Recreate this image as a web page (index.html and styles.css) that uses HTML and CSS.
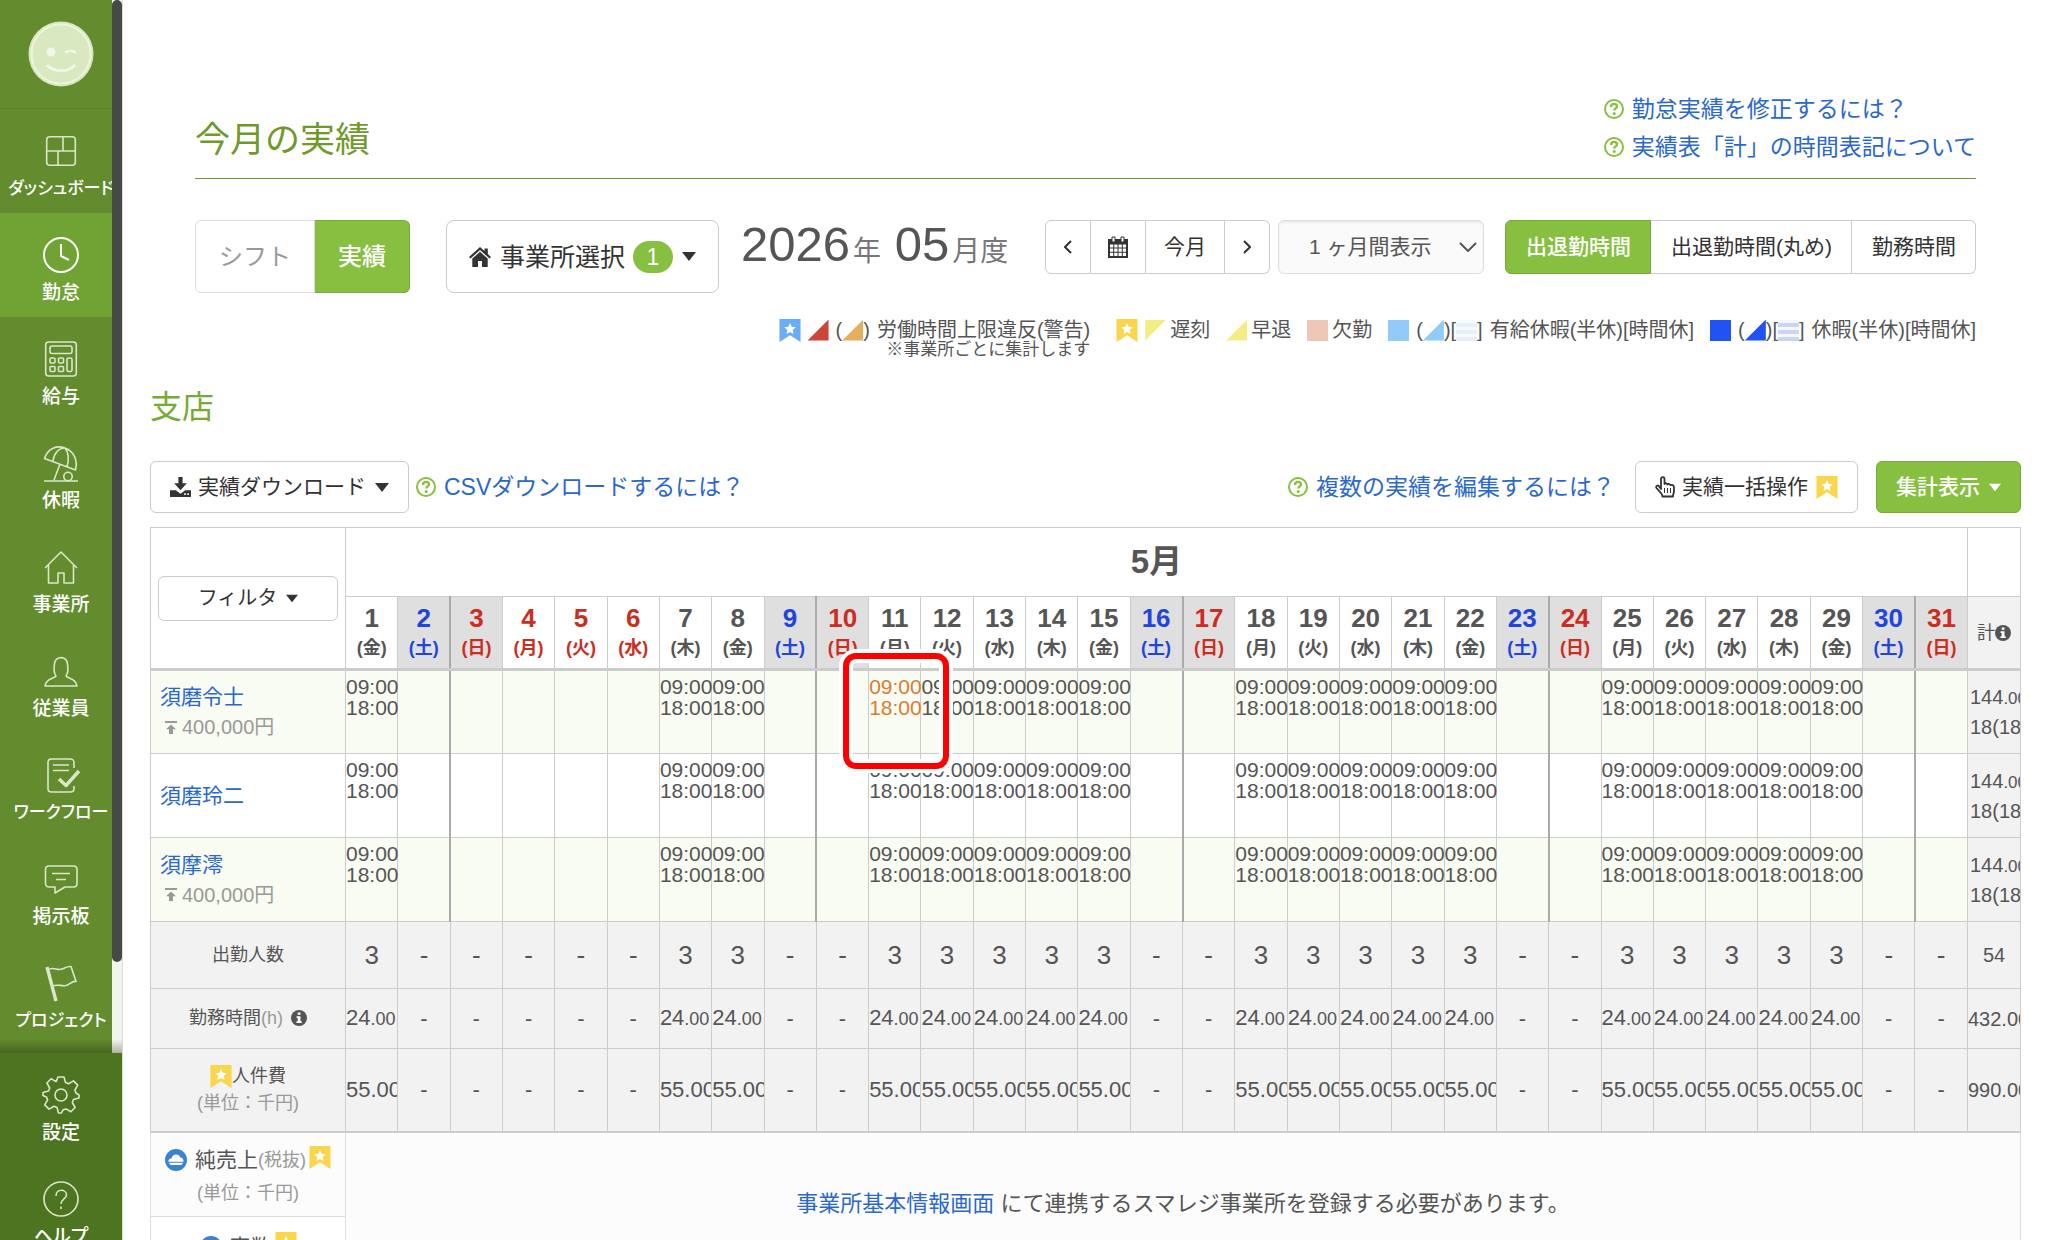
FILE: index.html
```html
<!DOCTYPE html>
<html lang="ja">
<head>
<meta charset="utf-8">
<title>今月の実績</title>
<link rel="stylesheet" href="styles.css">
</head>
<body>
<svg class="sprite" aria-hidden="true">
  <symbol id="help" viewBox="0 0 20 20"><circle cx="10" cy="10" r="9" fill="none" stroke="currentColor" stroke-width="2"/><path d="M7 8c0-4 6-4 6-.6 0 2-2.800 2-2.800 4.200" fill="none" stroke="currentColor" stroke-width="2.400"/><circle cx="10.200" cy="14.600" r="1.500" fill="currentColor"/></symbol>
  <symbol id="info" viewBox="0 0 16 16"><circle cx="8" cy="8" r="8" fill="currentColor"/><path d="M6.700 2.500h2.800v2.300H6.700zM5.600 6.200h3.900v5h1.200v1.900H5.500v-1.900h1.200V8H5.600z" fill="#fff"/></symbol>
  <symbol id="mark" viewBox="0 0 22 24"><path d="M0 0h22v24l-11-7-11 7z" fill="currentColor"/><path d="M11 4.300l1.800 3.900 4.200.4-3.200 2.900.9 4.200-3.700-2.200-3.700 2.200.9-4.200L5 8.600l4.200-.4z" fill="#fff"/></symbol>
  <symbol id="caret" viewBox="0 0 14 9"><path d="M0 0h14L7 9z" fill="currentColor"/></symbol>
  <symbol id="cloud" viewBox="0 0 22 22"><circle cx="11" cy="11" r="11" fill="#3b82cf"/><path d="M3.500 12.800c-.3-2.300 1-3.600 3-3.400C7.200 6.800 8.800 5.400 11 5.400c2.200 0 3.700 1.200 4.200 3.200 2.200.1 3.500 1.700 3.300 4.200z" fill="#fff"/><path d="M4 13.800h14c-.6 1.600-1.500 2.300-3 2.300H7c-1.500 0-2.500-.7-3-2.300z" fill="#fff"/></symbol>
  <symbol id="cap" viewBox="0 0 12 13"><path d="M0 0h12v2H0zM6 3.500l5 4.800H8V13H4V8.300H1z" fill="currentColor"/></symbol>
</svg>
<div class="app">
  <nav class="side" aria-label="メインメニュー">
    <div class="side-list">
      <a class="logo" href="#" aria-label="ホーム">
        <svg width="66" height="66" viewBox="0 0 66 66"><circle cx="33" cy="33" r="32.500" fill="#dae8bf"/><circle cx="33" cy="33" r="29.500" fill="none" stroke="#edf3e2" stroke-width="2"/><circle cx="23" cy="31" r="4.500" fill="#f2f6ec"/><path d="M37.500 32c2-3 8-3 10 0M19 44c7 7.500 21 7.500 28 0" fill="none" stroke="#f2f6ec" stroke-width="2.600"/></svg>
      </a>
      <a class="item long" href="#"><svg viewBox="0 0 40 40"><rect x="5.700" y="5.700" width="28.600" height="28.600" rx="3"/><path d="M6 20h28M22 6v14M17 20v14"/></svg><span>ダッシュボード</span></a>
      <a class="item active" href="#"><svg viewBox="0 0 40 40"><circle cx="20" cy="20" r="17"/><path d="M20 9v12l8 4"/></svg><span>勤怠</span></a>
      <a class="item" href="#"><svg viewBox="0 0 40 40"><rect x="4.700" y="3" width="30.600" height="34" rx="3"/><rect x="9" y="7" width="22" height="7.500" rx="2"/><rect x="9" y="19" width="5" height="5" rx="1"/><rect x="17.500" y="19" width="5" height="5" rx="1"/><rect x="9" y="27.500" width="5" height="5" rx="1"/><rect x="17.500" y="27.500" width="5" height="5" rx="1"/><rect x="26" y="19" width="5" height="13.500" rx="1.500"/></svg><span>給与</span></a>
      <a class="item" href="#"><svg viewBox="0 0 40 40"><path d="M3.500 15.500C7 5 16 2 24 5c9 3.500 13 12 10.500 22zM12 18c1-8 6-13 12-13 4 5 4 12 2 19M19 21l-6 16M3 38h34"/><circle cx="27" cy="33.500" r="4.200"/></svg><span>休暇</span></a>
      <a class="item" href="#"><svg viewBox="0 0 40 40"><path d="M4 21L20 5l16 16M7.500 18v18H17V26h6v10h9.500V18"/></svg><span>事業所</span></a>
      <a class="item" href="#"><svg viewBox="0 0 40 40"><path d="M15 25c-3-4-2-8-1.500-12C14 4.500 26 4.500 26.500 13c.5 4 1.500 8-1.500 12 2 3 10 2 11 10H4c1-8 9-7 11-10z"/></svg><span>従業員</span></a>
      <a class="item long" href="#"><svg viewBox="0 0 40 40"><path d="M33 13V7.500c0-2-1.500-3.500-3.500-3.500h-19C8.500 4 7 5.500 7 7.500v26C7 35.500 8.500 37 10.500 37h19c2 0 3.500-1.500 3.500-3.500V31M12 10h16M12 15.500h16"/><path class="thick" d="M18 24l7 6.500L38 16"/></svg><span>ワークフロー</span></a>
      <a class="item" href="#"><svg viewBox="0 0 40 40"><path d="M8 7h24.500c2 0 3.500 1.500 3.500 3.500v14c0 2-1.500 3.500-3.500 3.500H24l-10 6v-6H8c-2 0-3.500-1.500-3.500-3.500v-14C4.500 8.500 6 7 8 7zM11 14.500h18M15 20.500h10"/></svg><span>掲示板</span></a>
      <a class="item long" href="#"><svg viewBox="0 0 40 40"><path class="thick" d="M6 4l9 34"/><path d="M7 7c5-4 9 1 14-1 3-1 5-3 9-2.500l5 15c-4-1-6 3-10 4-5 1-9-2-14 1"/></svg><span>プロジェクト</span></a>
      <div class="track"><div class="thumb"></div></div>
    </div>
    <div class="side-foot">
      <a class="item" href="#"><svg viewBox="0 0 40 40"><path d="M17 2h6l1.500 5.500 3 1.200 5-2.800 4.200 4.200-2.800 5 1.200 3L38 20v3l-5.500 1.500-1.200 3 2.800 5-4.200 4.200-5-2.800-3 1.200L20.500 38h-3L16 32.500l-3-1.200-5 2.800-4.200-4.200 2.800-5-1.200-3L2 20.500v-3L7.500 16l1.200-3-2.800-5 4.200-4.200 5 2.800z"/><circle cx="20" cy="20" r="6"/></svg><span>設定</span></a>
      <a class="item" href="#"><svg viewBox="0 0 40 40"><circle cx="20" cy="20" r="17"/><path d="M15 17c0-8 10.500-7 10.500-1 0 4-5.500 4-5.500 9M20 27.500v2.500"/></svg><span>ヘルプ</span></a>
    </div>
  </nav>

  <main class="main">
    <header class="page-head">
      <h1>今月の実績</h1>
      <div class="head-links">
        <a class="help-link" href="#"><svg><use href="#help"/></svg>勤怠実績を修正するには？</a>
        <a class="help-link" href="#"><svg><use href="#help"/></svg>実績表「計」の時間表記について</a>
      </div>
    </header>

    <div class="toolbar">
      <div class="group big">
        <button class="seg shift">シフト</button><button class="seg on">実績</button>
      </div>
      <button class="btn office"><svg class="home" viewBox="0 0 22 20"><path d="M11 0l4.500 4V1.500h3.300V7L22 10l-1.500 1.600L11 3 1.500 11.600 0 10zM3.300 11.500L11 4.800l7.700 6.700V20H13v-6H9v6H3.300z" fill="currentColor"/></svg>事業所選択<span class="badge">1</span><svg class="caret"><use href="#caret"/></svg></button>
      <h2 class="period">2026<small>年</small> 05<small>月度</small></h2>
      <div class="tools">
        <div class="group nav">
          <button class="seg" aria-label="前月"><svg width="8" height="14" viewBox="0 0 8 14"><path d="M7 1L1 7l6 6" fill="none" stroke="currentColor" stroke-width="2"/></svg></button><button class="seg cal" aria-label="カレンダー"><svg width="22" height="22" viewBox="0 0 22 22"><path d="M1 3h20v19H1z" fill="currentColor"/><path d="M3 8.500h3.200v3H3zm4.200 0h3.300v3H7.200zm4.300 0h3.300v3h-3.300zm4.300 0H19v3h-3.200zM3 12.500h3.200v3.300H3zm4.200 0h3.300v3.300H7.200zm4.300 0h3.300v3.300h-3.300zm4.300 0H19v3.300h-3.200zM3 16.800h3.200V20H3zm4.200 0h3.300V20H7.200zm4.300 0h3.300V20h-3.300zm4.300 0H19V20h-3.200z" fill="#fff"/><path d="M5 1h3v5H5zM14 1h3v5h-3z" fill="#fff" stroke="currentColor"/></svg></button><button class="seg now">今月</button><button class="seg" aria-label="翌月"><svg width="8" height="14" viewBox="0 0 8 14"><path d="M1 1l6 6-6 6" fill="none" stroke="currentColor" stroke-width="2"/></svg></button>
        </div>
        <div class="select-box">
          <select aria-label="表示期間"><option>1 ヶ月間表示</option></select>
          <svg viewBox="0 0 18 10"><path d="M1 1l8 8 8-8" fill="none" stroke="currentColor" stroke-width="2"/></svg>
        </div>
        <div class="group modes">
          <button class="seg on">出退勤時間</button><button class="seg">出退勤時間(丸め)</button><button class="seg">勤務時間</button>
        </div>
      </div>
    </div>

    <div class="legend">
      <div class="legend-first">
        <span class="key"><svg class="mark blue"><use href="#mark"/></svg><i class="sw tri red"></i><span class="paren">(<i class="sw tri orange"></i>)</span>労働時間上限違反(警告)</span>
        <small>※事業所ごとに集計します</small>
      </div>
      <span class="key tight"><svg class="mark"><use href="#mark"/></svg><i class="sw tri-top"></i>遅刻</span>
      <span class="key tight"><i class="sw tri yellow"></i>早退</span>
      <span class="key tight"><i class="sw absent"></i>欠勤</span>
      <span class="key"><i class="sw paid"></i><span class="paren">(<i class="sw tri paid-half"></i>)[<i class="sw stripe-paid"></i>]</span>有給休暇(半休)[時間休]</span>
      <span class="key"><i class="sw leave"></i><span class="paren">(<i class="sw tri leave-half"></i>)[<i class="sw stripe-leave"></i>]</span>休暇(半休)[時間休]</span>
    </div>

    <h2 class="branch">支店</h2>

    <div class="actions">
      <button class="btn"><svg class="ic" viewBox="0 0 20 19"><path d="M8 0h4v6h4l-6 6.500L4 6h4zM0 12.500h5.500L10 16l4.500-3.500H20V19H0z" fill="currentColor"/><path d="M13.500 15.500h1.600v1.600h-1.600zM16.500 15.500H18v1.600h-1.500z" fill="#fff"/></svg>実績ダウンロード<svg class="caret"><use href="#caret"/></svg></button>
      <a class="help-link" href="#"><svg><use href="#help"/></svg>CSVダウンロードするには？</a>
      <a class="help-link end" href="#"><svg><use href="#help"/></svg>複数の実績を編集するには？</a>
      <button class="btn bulk"><svg class="hand" viewBox="0 0 20 22"><path d="M6 13V3.200C6 .5 9.500.5 9.500 3.200V8c1-1.200 2.800-.8 3 .5 1-1 2.800-.5 3 .7 1.200-.8 3.500-.3 3.500 2.300v3.700c0 1.800-1 2.800-1 5.300H7.500c0-2-1-2.600-2.200-4.200L1.500 12c-1-1.800 1-3.300 2.500-1.800z" fill="none" stroke="currentColor" stroke-width="1.800" stroke-linejoin="round"/><path d="M9.500 12v5M12.500 12v5M15.500 12v5" stroke="currentColor"/></svg>実績一括操作<svg class="mark"><use href="#mark"/></svg></button>
      <button class="btn green">集計表示<svg class="caret small"><use href="#caret"/></svg></button>
    </div>

    <table class="sheet">
      <colgroup><col class="c-name"><col span="31"><col class="c-sum"></colgroup>
      <thead>
        <tr class="h-month">
          <th rowspan="2" class="filter-cell"><button class="btn filter">フィルタ<svg class="caret small"><use href="#caret"/></svg></button></th>
          <th colspan="31" class="month">5月</th>
          <th></th>
        </tr>
        <tr class="h-days" id="days"></tr>
      </thead>
      <tbody id="rows"></tbody>
      <tbody class="linked">
        <tr class="sales">
          <th scope="row"><div class="line"><svg class="cloud"><use href="#cloud"/></svg><span class="lg">純売上</span><span class="unit">(税抜)</span><svg class="mark raised"><use href="#mark"/></svg></div><div class="unit gap">(単位：千円)</div></th>
          <td rowspan="2" colspan="32"><a href="#">事業所基本情報画面</a> にて連携するスマレジ事業所を登録する必要があります。</td>
        </tr>
        <tr class="guests">
          <th scope="row"><div class="line"><svg class="cloud"><use href="#cloud"/></svg><span class="lg">客数</span><svg class="mark raised"><use href="#mark"/></svg></div></th>
        </tr>
      </tbody>
    </table>
  </main>
</div>
<script src="script.js"></script>
</body>
</html>
```
FILE: script.js
```js
const WEEK = ["日", "月", "火", "水", "木", "金", "土"];
const DAYS = Array.from({ length: 31 }, (_, i) => i + 1);
const HOLIDAYS = [4, 5, 6];
const CORRECTED = 11;

const weekday = (d) => (d + 4) % 7;
const isWorkday = (d) => weekday(d) > 0 && weekday(d) < 6 && !HOLIDAYS.includes(d);

function dayClass(d) {
  const w = weekday(d);
  if (w === 6) return "sat";
  if (w === 0) return "sun";
  return HOLIDAYS.includes(d) ? "hol" : "";
}

document.getElementById("days").innerHTML =
  DAYS.map((d) => `<th scope="col" class="${dayClass(d)}"><b>${d}</b><span>(${WEEK[weekday(d)]})</span></th>`).join("") +
  `<th scope="col" class="sum-head">計<svg class="info"><use href="#info"/></svg></th>`;

const staff = [
  { name: "須磨令士", pay: "400,000円", corrected: true },
  { name: "須磨玲二" },
  { name: "須摩澪", pay: "400,000円" },
];

function staffRow(p) {
  const pay = p.pay ? `<div class="pay"><svg><use href="#cap"/></svg>${p.pay}</div>` : "";
  const cells = DAYS.map((d) => {
    if (!isWorkday(d)) return `<td class="${dayClass(d)}"></td>`;
    const hit = p.corrected && d === CORRECTED;
    return `<td class="${hit ? "corrected" : ""}"><div class="time">09:00<br>18:00</div>${hit ? '<div class="focus"></div>' : ""}</td>`;
  }).join("");
  return `<tr class="staff"><th scope="row"><a href="#">${p.name}</a>${pay}</th>${cells}` +
    `<td class="sum"><div class="clip">144<small>.00</small><br>18(18)</div></td></tr>`;
}

const totals = [
  { cls: "count", head: "出勤人数", value: "3", sum: "54" },
  { cls: "hours", head: '勤務時間<span class="unit">(h)</span><svg class="info"><use href="#info"/></svg>', value: "24<small>.00</small>", sum: "432.00" },
  { cls: "cost", head: '<div class="line"><svg class="mark"><use href="#mark"/></svg>人件費</div><div class="unit">(単位：千円)</div>', value: "55.00", sum: "990.00" },
];

function totalRow(t) {
  const cells = DAYS.map((d) => `<td>${isWorkday(d) ? `<div class="clip">${t.value}</div>` : "-"}</td>`).join("");
  return `<tr class="total ${t.cls}"><th scope="row">${t.head}</th>${cells}<td class="sum"><div class="clip">${t.sum}</div></td></tr>`;
}

document.getElementById("rows").innerHTML =
  staff.map(staffRow).join("") + totals.map(totalRow).join("");
```
FILE: styles.css
```css
* { box-sizing: border-box; }
body {
  margin: 0;
  font-family: "Liberation Sans", "Noto Sans CJK JP", sans-serif;
  font-size: 21px;
  line-height: 28px;
  color: #555;
  background: #fff;
}
a { color: #2b68c9; text-decoration: none; }
button, select { font: inherit; line-height: 24px; color: #333; cursor: pointer; }
h1, h2 { margin: 0; font-weight: 400; }
svg { flex: none; }
.sprite { position: absolute; width: 0; height: 0; }

.app { display: flex; height: 100vh; overflow: hidden; }

/* sidebar */
.side {
  width: 123px;
  flex: none;
  display: flex;
  flex-direction: column;
  overflow: hidden;
  border-right: 1px solid #ddd;
  background: #4c7421;
}
.side-list { position: relative; flex: none; padding-bottom: 8px; background: #628c2d; }
.side-list::after {
  content: "";
  position: absolute;
  inset: auto 0 0 0;
  height: 14px;
  background: linear-gradient(rgba(0, 0, 0, 0), rgba(0, 0, 0, .28));
}
.logo {
  display: flex;
  align-items: center;
  justify-content: center;
  height: 109px;
  border-bottom: 1px solid #587f28;
}
.item {
  display: flex;
  flex-direction: column;
  align-items: center;
  gap: 4px;
  height: 104px;
  padding-top: 22px;
  color: #fff;
  font-size: 19px;
  font-weight: 500;
  line-height: 28px;
  white-space: nowrap;
  font-feature-settings: "palt";
}
.item.long { font-size: 17px; }
.item svg {
  width: 40px;
  height: 40px;
  fill: none;
  stroke: #dbe6ca;
  stroke-width: 1.6;
  stroke-linejoin: round;
}
.item svg .thick { stroke-width: 3.4; }
.item.active { background: #70a234; }
.item.active svg { stroke: #fff; stroke-width: 2; }
.track { position: absolute; top: 0; right: 0; bottom: 0; width: 10px; background: #f2f5ec; }
.thumb { height: 91.4%; border-radius: 5px; background: #474946; }

/* page */
.main { flex: 1; min-width: 0; padding: 90px 27px 0; overflow-y: auto; scrollbar-width: none; }
.page-head {
  display: flex;
  justify-content: space-between;
  align-items: flex-end;
  margin: 0 45px;
  border-bottom: 1px solid #6f9a2b;
}
h1 { padding-bottom: 18px; font-size: 35px; line-height: 40px; color: #6f9a2b; }
.head-links { padding-bottom: 12px; }
.help-link { display: flex; align-items: center; gap: 8px; font-size: 23px; line-height: 38px; white-space: nowrap; }
.help-link svg { width: 20px; height: 20px; color: #87bf40; }

.toolbar { display: flex; align-items: flex-start; margin: 41px 45px 0; white-space: nowrap; }
.btn {
  display: flex;
  align-items: center;
  justify-content: center;
  height: 52px;
  padding: 0 19px;
  border: 1px solid #ccc;
  border-radius: 6px;
  background: #fff;
  white-space: nowrap;
}
.caret { width: 14px; height: 9px; margin-left: 9px; }
.caret.small { width: 12px; height: 9px; }
.group { display: flex; height: 54px; }
.group.big { height: 73px; font-size: 24px; }
.seg {
  display: flex;
  align-items: center;
  justify-content: center;
  padding: 0 18px;
  border: 1px solid #ccc;
  border-left-width: 0;
  background: #fff;
}
.seg:first-child { border-left-width: 1px; border-radius: 6px 0 0 6px; }
.seg:last-child { border-radius: 0 6px 6px 0; }
.seg.on { border-color: #78ab34; background: #87bf40; color: #fff; font-weight: 500; }
.modes .seg { padding: 0 19px 0 20px; }
.big .seg { padding: 0 23px; }
.big .shift { border-color: #ddd; color: #999; }
.office { height: 73px; margin-left: 36px; padding: 0 22px; border-radius: 8px; font-size: 25px; }
.home { width: 22px; height: 20px; margin-right: 9px; }
.badge {
  width: 40px;
  margin-left: 8px;
  border-radius: 16px;
  background: #87bf40;
  color: #fff;
  font-size: 23px;
  line-height: 32px;
}
.period { margin-left: 22px; font-size: 49px; line-height: 48px; }
.period small { margin-left: 3px; font-size: 28px; color: #777; }
.tools { display: flex; margin-left: auto; }
.nav .seg svg { margin: 0; }
.nav .cal { padding: 0 16px; }
.select-box { position: relative; margin: 0 21px 0 8px; }
.select-box select {
  appearance: none;
  width: 206px;
  height: 54px;
  padding: 0 30px;
  border: 1px solid #ddd;
  border-radius: 6px;
  background: #fafafa;
  box-shadow: inset 0 2px 2px rgba(0, 0, 0, .06);
  color: #555;
}
.select-box svg { position: absolute; right: 7px; top: 22px; width: 18px; height: 10px; pointer-events: none; }

/* legend */
.legend {
  display: flex;
  justify-content: flex-end;
  gap: 16px;
  margin: 25px 45px 0;
  font-size: 20px;
  line-height: 24px;
  white-space: nowrap;
}
.legend-first { display: flex; flex-direction: column; align-items: flex-end; margin-right: 10px; }
.legend small { font-size: 17px; line-height: 16px; }
.key { display: flex; align-items: center; gap: 7px; height: 24px; }
.key.tight { gap: 4px; }
.key.tight .mark { margin-right: 3px; }
.mark { width: 22px; height: 23px; color: #f9d64c; }
.mark.blue { color: #68adf5; }
.paren { display: flex; align-items: center; }
.sw { width: 21px; height: 21px; }
.tri { clip-path: polygon(100% 0, 100% 100%, 0 100%); }
.tri-top { background: #f3ee83; clip-path: polygon(0 0, 100% 0, 0 100%); }
.red { background: #cb4638; }
.orange { background: #e6ae60; }
.yellow { background: #f3ee83; }
.absent { background: #efc7b8; }
.paid, .paid-half { background: #90cbf9; }
.leave, .leave-half { background: #2152f3; }
.stripe-paid { background: repeating-linear-gradient(#f8fafe 0 3px, #e6effd 3px 7px); }
.stripe-leave { background: repeating-linear-gradient(#f6f8fe 0 3px, #c9d5f8 3px 7px); }

.branch { margin: 29px 0 0; font-size: 32px; line-height: 40px; color: #76ab32; }

.actions { display: flex; align-items: center; margin-top: 34px; }
.actions .ic { width: 21px; height: 20px; margin-right: 7px; }
.actions .help-link { margin-left: 7px; }
.actions .help-link.end { margin-left: auto; }
.bulk { margin: 0 18px 0 20px; }
.hand { width: 20px; height: 22px; margin-right: 7px; }
.bulk .mark { margin-left: 8px; }
.green { border-color: #78ab34; background: #87bf40; color: #fff; font-weight: 500; }

/* attendance table */
.sheet { width: 100%; margin-top: 14px; border-collapse: collapse; table-layout: fixed; }
.c-name { width: 195px; }
.c-sum { width: 53px; }
.sheet th, .sheet td { padding: 0; border: 1px solid #ccc; font-weight: 400; white-space: nowrap; }
.sheet td { text-align: center; }
.h-month { height: 69px; }
.sheet .month { font-size: 33px; font-weight: 700; line-height: 40px; }
.filter { width: 180px; height: 45px; margin: 0 auto; font-size: 20px; }
.h-days { height: 73px; }
.h-days th b { display: block; font-size: 26px; line-height: 32px; }
.h-days th span { display: block; font-size: 18px; font-weight: 700; line-height: 29px; }
.h-days .sat, .h-days .sun { background: #dfdfdf; }
.sat { color: #2145dc; }
.sun, .hol { color: #cb2d22; }
.sheet .sun { border-left: 2px solid #aaa; }
.sheet .sum-head { background: #f2f2f2; font-size: 18px; }
.info { width: 16px; height: 16px; vertical-align: -2px; }
#rows { border-top: 3px solid #ccc; border-bottom: 2px solid #ccc; }

.staff { height: 84px; }
.staff:nth-child(odd) { background: #f9fcf2; }
.staff th { padding-left: 9px; text-align: left; line-height: 30px; }
.staff td { vertical-align: top; text-align: left; }
.pay { display: flex; align-items: center; gap: 5px; padding-left: 5px; font-size: 20px; color: #999; }
.pay svg { width: 12px; height: 13px; }
.time { width: 0; padding-top: 5px; line-height: 21px; }
.corrected { position: relative; color: #d97c33; }
.focus {
  position: absolute;
  top: -18px;
  left: -26px;
  width: 106px;
  height: 116px;
  border: 6px solid #f00;
  border-radius: 13px;
  box-shadow: 0 0 0 4px #fff, inset 0 0 0 4px #fff;
}
.clip { overflow: hidden; }
.sheet .sum { background: #f2f2f2; vertical-align: middle; font-size: 20px; line-height: 28px; }
.staff .sum .clip { padding-left: 2px; }
.sum small { font-size: 17px; }
.total { background: #f2f2f2; }
.sheet .total th { font-size: 18px; line-height: 27px; }
.total .info { margin-left: 8px; }
.unit { font-size: 18px; color: #999; }
.count { height: 67px; }
.count td { font-size: 26px; line-height: 30px; }
.hours { height: 60px; }
.hours td, .cost td { font-size: 22px; line-height: 30px; text-align: center; }
.hours .clip, .cost .clip { text-align: left; }
.hours small { font-size: 18px; }
.cost { height: 83px; }
.line { display: flex; align-items: center; justify-content: center; }

.linked th, .linked td { border-color: #ddd; background: #fcfcfc; }
.linked td { font-size: 22px; }
.sales { height: 85px; }
.sales th { padding-top: 4px; }
.guests { height: 60px; }
.linked .guests th { background: #fff; }
.cloud { width: 22px; height: 22px; margin-right: 8px; }
.lg { font-size: 21px; line-height: 30px; }
.raised { margin: -6px 0 0 3px; }
.gap { margin-top: 4px; line-height: 28px; }
```
